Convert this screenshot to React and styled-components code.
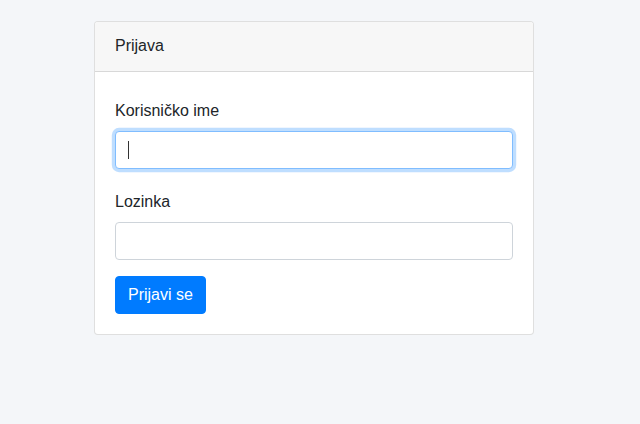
import styled, { createGlobalStyle } from "styled-components";

const GlobalStyle = createGlobalStyle`
  html, body {
    margin: 0;
    padding: 0;
    background: #f4f6f9;
    font-family: "Liberation Sans", Arial, sans-serif;
    font-size: 16px;
    line-height: 24px;
    color: #212529;
  }
  * {
    box-sizing: border-box;
  }
`;

export default function App() {
  return (
    <Page>
      <GlobalStyle />
      <Card>
        <CardHeader>Prijava</CardHeader>
        <CardBody>
          <FormGroup>
            <Label htmlFor="username">Korisničko ime</Label>
            <InputWrap>
              <Input id="username" type="text" focused />
              <Caret />
            </InputWrap>
          </FormGroup>
          <FormGroup last>
            <Label htmlFor="password">Lozinka</Label>
            <Input id="password" type="password" />
          </FormGroup>
          <Button type="button">Prijavi se</Button>
        </CardBody>
      </Card>
    </Page>
  );
}

const Page = styled.div`
  min-height: 424px;
  padding: 21px 0 0 94px;
`;

const Card = styled.div`
  width: 440px;
  background: #fff;
  border: 1px solid rgba(0, 0, 0, 0.125);
  border-radius: 4px;
  overflow: hidden;
`;

const CardHeader = styled.div`
  padding: 12px 20px 13px;
  background: #f7f7f7;
  border-bottom: 1px solid rgba(0, 0, 0, 0.125);
`;

const CardBody = styled.div`
  padding: 27px 20px 20px;
  display: flex;
  flex-direction: column;
  align-items: flex-start;
`;

const FormGroup = styled.div`
  width: 100%;
  display: flex;
  flex-direction: column;
  margin-bottom: ${(p) => (p.last ? "16px" : "21px")};
`;

const Label = styled.label`
  display: block;
  margin-bottom: 8px;
`;

const InputWrap = styled.div`
  position: relative;
  width: 100%;
`;

const Caret = styled.span`
  position: absolute;
  left: 13px;
  top: 10px;
  width: 1px;
  height: 18px;
  background: #333;
  pointer-events: none;
`;

const Input = styled.input.withConfig({
  shouldForwardProp: (prop) => prop !== "focused",
})`
  display: block;
  width: 100%;
  height: 38px;
  padding: 6px 12px;
  font-family: inherit;
  font-size: 16px;
  color: #495057;
  background: #fff;
  border: 1px solid ${(p) => (p.focused ? "#80bdff" : "#ced4da")};
  border-radius: 4px;
  outline: none;
  box-shadow: ${(p) =>
    p.focused ? "0 0 0 3.2px rgba(0, 123, 255, 0.25)" : "none"};

  &:focus {
    border-color: #80bdff;
    box-shadow: 0 0 0 3.2px rgba(0, 123, 255, 0.25);
  }
`;

const Button = styled.button`
  height: 38px;
  padding: 6px 12px;
  font-family: inherit;
  font-size: 16px;
  line-height: 24px;
  color: #fff;
  background: #007bff;
  border: 1px solid #007bff;
  border-radius: 4px;
  cursor: pointer;
`;
